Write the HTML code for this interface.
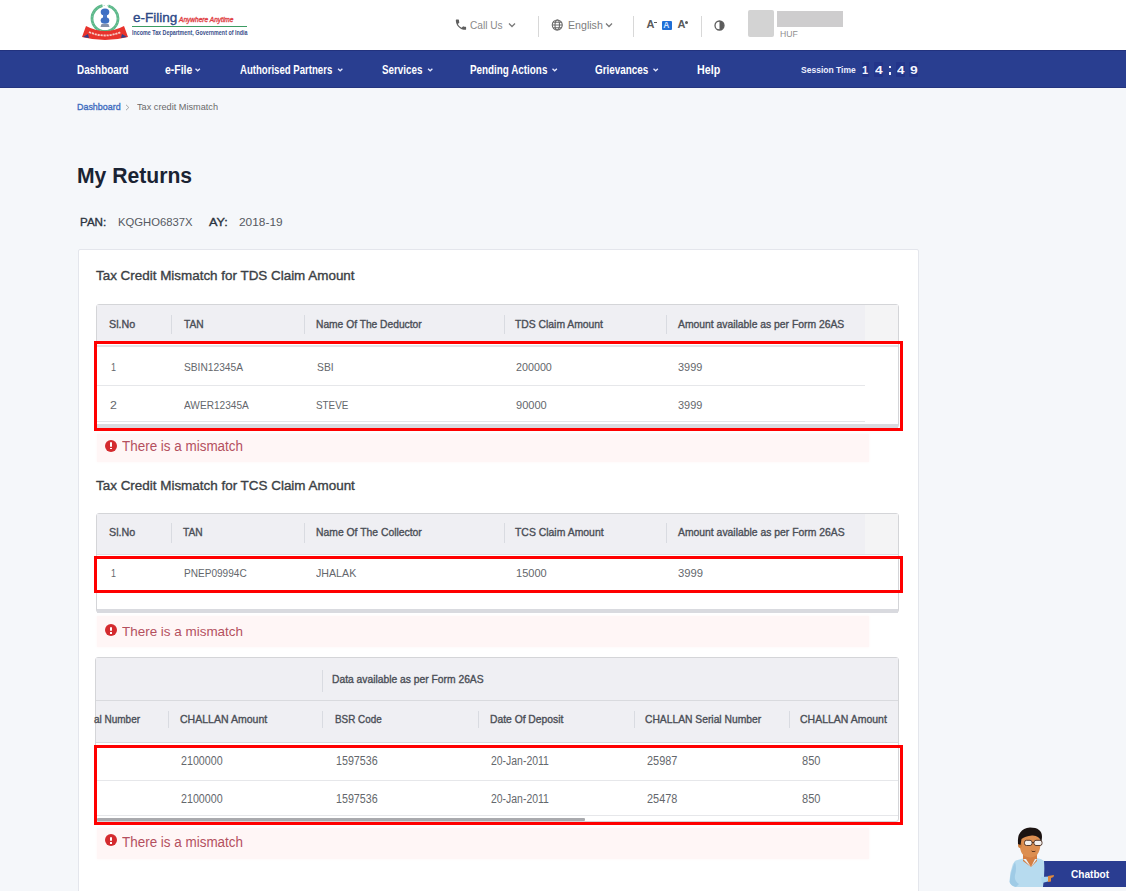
<!DOCTYPE html>
<html><head><meta charset="utf-8">
<style>
*{box-sizing:border-box}
html,body{margin:0;padding:0}
body{width:1126px;height:891px;overflow:hidden;position:relative;background:#f5f7fa;font-family:"Liberation Sans",sans-serif}
.a{position:absolute}
.t{position:absolute;white-space:nowrap;font-family:"Liberation Sans",sans-serif}
.hd{background:#efeff3}
.dv{position:absolute;width:1px;background:#d9dbe1}
.hl{position:absolute;height:1px;background:#e6e7ea}
.red{position:absolute;border:3px solid #ff0000}
.alert{position:absolute;left:97px;width:772px;background:#fff6f6;box-shadow:0 0 3px #fff6f6}
.ic{position:absolute;width:12px;height:12px;border-radius:50%;background:#d42b2f}
.ic:before{content:"";position:absolute;left:5px;top:2.5px;width:2px;height:4.5px;background:#fff;border-radius:1px}
.ic:after{content:"";position:absolute;left:5px;top:8px;width:2px;height:1.6px;background:#fff}
</style></head><body>
<!-- header -->
<div class="a" style="left:0;top:0;width:1126px;height:50px;background:#fff"></div>
<!-- logo -->
<svg class="a" style="left:80px;top:2px" width="52" height="40" viewBox="0 0 52 40">
  <circle cx="25" cy="16.5" r="13" fill="none" stroke="#5cb88a" stroke-width="2.8" stroke-dasharray="58.3 6 30"/><circle cx="25" cy="16.5" r="13" fill="none" stroke="#8fd0ae" stroke-width="1" stroke-dasharray="1 2.5"/>
  <ellipse cx="25" cy="10" rx="4.3" ry="3.6" fill="#3d6fc4"/>
  <rect x="23" y="12.5" width="4" height="4" fill="#4a78c8"/>
  <ellipse cx="25" cy="18.5" rx="4.3" ry="3.3" fill="#3f70c2"/>
  <path d="M21.5 22 h7 l1 3 h-9z" fill="#8592aa"/>
  <path d="M6 24 Q25 34 44 24 L48 35 Q25 41 2 35 Z" fill="#e8332c"/>
  <path d="M3 35 l5 -3 l1 4z M47 35 l-5 -3 l-1 4z" fill="#33408a"/>
  <path d="M9 30 Q25 37 41 30" fill="none" stroke="#f6c9c3" stroke-width="1.8" stroke-dasharray="2.2 0.8"/>
</svg>
<div class="a" style="left:132px;top:26px;width:115px;height:1.3px;background:#3c9c62"></div>
<!-- call us -->
<svg class="a" style="left:454.5px;top:18.5px" width="12.5" height="12" viewBox="2 2 21 21"><path fill="#5f5f5f" d="M6.6 10.8c1.4 2.8 3.8 5.1 6.6 6.6l2.2-2.2c.3-.3.7-.4 1-.2 1.1.4 2.3.6 3.6.6.6 0 1 .4 1 1V20c0 .6-.4 1-1 1C10.6 21 3 13.4 3 4c0-.6.4-1 1-1h3.5c.6 0 1 .4 1 1 0 1.3.2 2.5.6 3.6.1.3 0 .7-.2 1L6.6 10.8z"/></svg>
<svg class="a" style="left:508px;top:22px" width="8" height="6" viewBox="0 0 8 6"><path d="M1 1.5 L4 4.5 L7 1.5" fill="none" stroke="#7a7a7a" stroke-width="1.3"/></svg>
<div class="a" style="left:537.5px;top:16px;width:1.2px;height:21px;background:#d8d8d8"></div>
<svg class="a" style="left:550.5px;top:18.5px" width="12.5" height="12" viewBox="0 0 24 24"><g fill="none" stroke="#6a6a6a" stroke-width="2.2"><circle cx="12" cy="12" r="10"/><ellipse cx="12" cy="12" rx="4.5" ry="10"/><path d="M2 12h20M4 6.5h16M4 17.5h16"/></g></svg>
<svg class="a" style="left:604.5px;top:22px" width="8" height="6" viewBox="0 0 8 6"><path d="M1 1.5 L4 4.5 L7 1.5" fill="none" stroke="#7a7a7a" stroke-width="1.3"/></svg>
<div class="a" style="left:632.5px;top:16px;width:1.2px;height:21px;background:#d8d8d8"></div>
<!-- A- A A+ -->
<div class="t" style="left:646.5px;top:19px;font-size:11px;line-height:11px;font-weight:700;color:#5a5a5a">A</div>
<div class="a" style="left:653.5px;top:21.5px;width:3px;height:1.2px;background:#5a5a5a"></div>
<div class="a" style="left:661.5px;top:20.5px;width:10px;height:9px;background:#1f6fd6;border-radius:1px"></div>
<div class="t" style="left:663.2px;top:20.6px;font-size:8.5px;line-height:9px;font-weight:700;color:#cfe3ff">A</div>
<div class="t" style="left:677.5px;top:19px;font-size:11px;line-height:11px;font-weight:700;color:#5a5a5a">A</div>
<div class="a" style="left:684.5px;top:20.5px;width:3px;height:3px;background:#5a5a5a;border-radius:50%"></div>
<div class="a" style="left:700.5px;top:16px;width:1.2px;height:21px;background:#d8d8d8"></div>
<svg class="a" style="left:713.5px;top:19.5px" width="11" height="11" viewBox="0 0 22 22"><circle cx="11" cy="11" r="9" fill="#fff" stroke="#5c5c5c" stroke-width="2.6"/><path d="M11 2 A9 9 0 0 1 11 20 Z" fill="#5c5c5c"/></svg>
<div class="a" style="left:747.5px;top:10px;width:26px;height:27px;background:#d3d3d3;border-radius:2px"></div>
<div class="a" style="left:777px;top:10.5px;width:66px;height:16px;background:#cecdce"></div>
<!-- nav -->
<div class="a" style="left:0;top:50px;width:1126px;height:38px;background:#293e90;border-top:1px solid #22327e;border-bottom:1px solid #24357f"></div>
<svg class="a" style="left:0;top:50px" width="1126" height="38" viewBox="0 0 1126 38">
 <g fill="none" stroke="#e6e9ff" stroke-width="1.3">
  <path d="M195.5 18.8 l2.2 2 l2.2 -2"/>
  <path d="M338 18.8 l2.2 2 l2.2 -2"/>
  <path d="M428 18.8 l2.2 2 l2.2 -2"/>
  <path d="M552.5 18.8 l2.2 2 l2.2 -2"/>
  <path d="M653.5 18.8 l2.2 2 l2.2 -2"/>
 </g>
</svg>
<div class="a" style="left:861.5px;top:62px;width:7.5px;height:14.5px;background:#23358a;border-radius:1px"></div>
<div class="a" style="left:874.3px;top:62px;width:9px;height:14.5px;background:#23358a;border-radius:1px"></div>
<div class="a" style="left:896px;top:62px;width:8.8px;height:14.5px;background:#23358a;border-radius:1px"></div>
<div class="a" style="left:909px;top:62px;width:9.4px;height:14.5px;background:#23358a;border-radius:1px"></div>
<div class="a" style="left:888.5px;top:65.5px;width:2.8px;height:2.8px;background:#eef0ff"></div>
<div class="a" style="left:888.5px;top:71.8px;width:2.8px;height:2.8px;background:#eef0ff"></div>
<!-- breadcrumb chevron -->
<svg class="a" style="left:125px;top:103.5px" width="5" height="7" viewBox="0 0 5 7"><path d="M1 0.8 L3.8 3.5 L1 6.2" fill="none" stroke="#9a9a9a" stroke-width="0.9"/></svg>
<!-- card -->
<div class="a" style="left:78px;top:249px;width:841px;height:700px;background:#fff;border:1px solid #e4e6ec;border-radius:2px"></div>

<!-- table 1 -->
<div class="a" style="left:96px;top:304px;width:803px;height:124px;background:#fff;border:1px solid #d4d5d8;border-radius:3px"></div>
<div class="a hd" style="left:97px;top:305px;width:768px;height:36px"></div>
<div class="a" style="left:865px;top:305px;width:33px;height:36px;background:#f4f4f5"></div>
<div class="dv" style="left:171px;top:315px;height:19px"></div>
<div class="dv" style="left:304px;top:315px;height:19px"></div>
<div class="dv" style="left:504px;top:315px;height:19px"></div>
<div class="dv" style="left:666px;top:315px;height:19px"></div>
<div class="a" style="left:97px;top:345px;width:801px;height:2px;background:#e3e4e7"></div>
<div class="hl" style="left:97px;top:385px;width:768px"></div>
<div class="hl" style="left:97px;top:421px;width:768px;background:#e4e5e8"></div>
<div class="a" style="left:97px;top:423.5px;width:801px;height:4px;background:#d9dadf"></div>
<div class="red" style="left:94px;top:341px;width:809px;height:90px"></div>
<div class="alert" style="top:433.5px;height:28px"></div>
<div class="ic" style="left:105px;top:439.5px"></div>

<!-- table 2 -->
<div class="a" style="left:96px;top:513px;width:803px;height:100px;background:#fff;border:1px solid #d4d5d8;border-radius:3px"></div>
<div class="a hd" style="left:97px;top:514px;width:768px;height:40px"></div>
<div class="a" style="left:865px;top:514px;width:33px;height:40px;background:#f4f4f5"></div>
<div class="hl" style="left:97px;top:554px;width:801px;background:#dfe0e4"></div>
<div class="dv" style="left:171px;top:523px;height:20px"></div>
<div class="dv" style="left:304px;top:523px;height:20px"></div>
<div class="dv" style="left:504px;top:523px;height:20px"></div>
<div class="dv" style="left:666px;top:523px;height:20px"></div>
<div class="a" style="left:97px;top:609px;width:801px;height:4px;background:#d9dadf"></div>
<div class="red" style="left:94px;top:556px;width:809px;height:37px"></div>
<div class="alert" style="top:616px;height:31px"></div>
<div class="ic" style="left:104.8px;top:624px"></div>

<!-- table 3 -->
<div class="a" style="left:94.5px;top:657px;width:804px;height:165px;background:#fff;border:1px solid #d4d5d8;border-radius:3px"></div>
<div class="a hd" style="left:95.5px;top:658px;width:802px;height:84px"></div>
<div class="hl" style="left:95.5px;top:700px;width:802px;background:#d9dade"></div>
<div class="hl" style="left:95.5px;top:741.5px;width:802px;background:#d9dade"></div>
<div class="dv" style="left:322.3px;top:669.5px;height:22px"></div>
<div class="dv" style="left:167.8px;top:710.5px;height:17px"></div>
<div class="dv" style="left:322.3px;top:710.5px;height:17px"></div>
<div class="dv" style="left:478px;top:710.5px;height:17px"></div>
<div class="dv" style="left:633.5px;top:710.5px;height:17px"></div>
<div class="dv" style="left:788.7px;top:710.5px;height:17px"></div>
<div class="hl" style="left:97px;top:779.5px;width:801px"></div>
<div class="hl" style="left:97px;top:815px;width:801px;background:#e6e7ea"></div>
<div class="a" style="left:97px;top:818px;width:488px;height:3px;background:#a9aaae;border-radius:1px"></div>
<div class="red" style="left:94px;top:744.5px;width:808.5px;height:80.5px"></div>
<div class="alert" style="top:827.5px;height:31px"></div>
<div class="ic" style="left:104.8px;top:834.3px"></div>


<!-- chatbot -->
<div class="a" style="left:1039px;top:860.5px;width:87px;height:26.5px;background:#2a3d91;border-radius:3px 0 0 3px"></div>
<svg class="a" style="left:1000px;top:820px" width="70" height="71" viewBox="0 0 70 71">
  <path d="M15 41 Q22 38 27 38 L37 38 Q42 39 44 41 Q45 52 43 67 L17 67 Q12 67 10 63 Q9 55 12 47 Q13 43 15 41 Z" fill="#b7dbef"/>
  <path d="M15 42 Q11 50 9.5 62 Q11 66 16 67 L19 64 Q14 61 15 55 Q17 48 15 42Z" fill="#9fcbe6"/>
  <path d="M41 57 L49 56.5 L50 61 L42 63 Z" fill="#a9d4ee"/>
  <path d="M48 56 L54 55 L53.5 57 L51 58 L51 61.5 L48 62 Z" fill="#e08a3c"/>
  <path d="M23 33 L37 33 L37 41 L31 47 L23 41 Z" fill="#d47e42"/>
  <path d="M23 39 L31 47 L26 39Z M37 39 L31 47 L35 39Z" fill="#e6f3fb"/>
  <path d="M19.5 20 Q19 35 27 37 Q33 38.5 37 35 Q41 30 40.5 20 Q38 14 30 14 Q21 14 19.5 20 Z" fill="#dc8e50"/>
  <ellipse cx="20" cy="25" rx="2" ry="3" fill="#d0803f"/>
  <path d="M18 24 Q16.5 9 30 7.5 Q42 7.5 42 17 L41.5 22 Q39 15 32 15.5 Q25 16 21.5 19 L20.5 25 Z" fill="#1b1311"/>
  <g fill="#f3f0ee" stroke="#4a2e20" stroke-width="0.9"><rect x="24.5" y="20.3" width="7.5" height="5.2" rx="2"/><rect x="34" y="20.3" width="8" height="5.2" rx="2"/></g>
  <path d="M32 22.5 h2" stroke="#4a2e20" stroke-width="0.9"/>
  <path d="M31 30.5 Q33.5 33.5 36 30.8 Q33.5 31.8 31 30.5Z" fill="#3b1d12"/>
</svg>
<div class='t' style="left:133.11px;top:12.20px;font-size:12.78px;line-height:12.78px;font-weight:400;color:#2c4886;-webkit-text-stroke:0.35px #2c4886;transform:scaleX(1.0580);transform-origin:0 0;">e-Filing</div>
<div class='t' style="left:178.50px;top:17.30px;font-size:7.08px;line-height:7.08px;font-weight:400;color:#e03e44;-webkit-text-stroke:0.35px #e03e44;transform:scaleX(0.9275);transform-origin:0 0;font-style:italic;">Anywhere Anytime</div>
<div class='t' style="left:132.01px;top:29.60px;font-size:6.94px;line-height:6.94px;font-weight:700;color:#3a4f8a;transform:scaleX(0.7726);transform-origin:0 0;">Income Tax Department, Government of India</div>
<div class='t' style="left:470.27px;top:20.50px;font-size:10.43px;line-height:10.43px;font-weight:400;color:#8a8a8a;transform:scaleX(0.9722);transform-origin:0 0;">Call Us</div>
<div class='t' style="left:567.59px;top:20.60px;font-size:10.14px;line-height:10.14px;font-weight:400;color:#7d7d7d;transform:scaleX(1.0482);transform-origin:0 0;">English</div>
<div class='t' style="left:780.40px;top:30.20px;font-size:8.57px;line-height:8.57px;font-weight:400;color:#8f8f8f;transform:scaleX(1.0108);transform-origin:0 0;">HUF</div>
<div class='t' style="left:76.56px;top:64.00px;font-size:12.0px;line-height:12.0px;font-weight:700;color:#ffffff;transform:scaleX(0.8228);transform-origin:0 0;">Dashboard</div>
<div class='t' style="left:164.56px;top:64.00px;font-size:12.0px;line-height:12.0px;font-weight:700;color:#ffffff;transform:scaleX(0.8703);transform-origin:0 0;">e-File</div>
<div class='t' style="left:239.56px;top:64.00px;font-size:12.0px;line-height:12.0px;font-weight:700;color:#ffffff;transform:scaleX(0.7999);transform-origin:0 0;">Authorised Partners</div>
<div class='t' style="left:381.76px;top:64.00px;font-size:12.0px;line-height:12.0px;font-weight:700;color:#ffffff;transform:scaleX(0.8176);transform-origin:0 0;">Services</div>
<div class='t' style="left:470.46px;top:64.00px;font-size:12.0px;line-height:12.0px;font-weight:700;color:#ffffff;transform:scaleX(0.8211);transform-origin:0 0;">Pending Actions</div>
<div class='t' style="left:595.36px;top:64.00px;font-size:12.0px;line-height:12.0px;font-weight:700;color:#ffffff;transform:scaleX(0.8233);transform-origin:0 0;">Grievances</div>
<div class='t' style="left:696.66px;top:64.00px;font-size:12.0px;line-height:12.0px;font-weight:700;color:#ffffff;transform:scaleX(0.8910);transform-origin:0 0;">Help</div>
<div class='t' style="left:800.73px;top:65.40px;font-size:9.57px;line-height:9.57px;font-weight:700;color:#eef0ff;transform:scaleX(0.8903);transform-origin:0 0;">Session Time</div>
<div class='t' style="left:862.33px;top:64.50px;font-size:11.0px;line-height:11.0px;font-weight:700;color:#f4f6ff;transform:scaleX(1.0024);transform-origin:0 0;">1</div>
<div class='t' style="left:875.03px;top:64.50px;font-size:11.0px;line-height:11.0px;font-weight:700;color:#f4f6ff;transform:scaleX(1.2473);transform-origin:0 0;">4</div>
<div class='t' style="left:896.83px;top:64.50px;font-size:11.0px;line-height:11.0px;font-weight:700;color:#f4f6ff;transform:scaleX(1.2147);transform-origin:0 0;">4</div>
<div class='t' style="left:909.93px;top:64.50px;font-size:11.0px;line-height:11.0px;font-weight:700;color:#f4f6ff;transform:scaleX(1.2637);transform-origin:0 0;">9</div>
<div class='t' style="left:77.01px;top:102.40px;font-size:9.86px;line-height:9.86px;font-weight:400;color:#3d6cc0;-webkit-text-stroke:0.35px #3d6cc0;transform:scaleX(0.9068);transform-origin:0 0;">Dashboard</div>
<div class='t' style="left:136.61px;top:102.40px;font-size:9.86px;line-height:9.86px;font-weight:400;color:#6a6a6a;transform:scaleX(0.9310);transform-origin:0 0;">Tax credit Mismatch</div>
<div class='t' style="left:77.15px;top:165.00px;font-size:22.14px;line-height:22.14px;font-weight:700;color:#1a2333;transform:scaleX(0.9553);transform-origin:0 0;">My Returns</div>
<div class='t' style="left:80.48px;top:215.60px;font-size:11.71px;line-height:11.71px;font-weight:400;color:#2c3440;-webkit-text-stroke:0.35px #2c3440;transform:scaleX(0.9919);transform-origin:0 0;">PAN:</div>
<div class='t' style="left:117.58px;top:215.60px;font-size:11.71px;line-height:11.71px;font-weight:400;color:#555a62;transform:scaleX(0.9628);transform-origin:0 0;">KQGHO6837X</div>
<div class='t' style="left:208.98px;top:215.60px;font-size:11.71px;line-height:11.71px;font-weight:400;color:#2c3440;-webkit-text-stroke:0.35px #2c3440;transform:scaleX(1.0853);transform-origin:0 0;">AY:</div>
<div class='t' style="left:238.68px;top:215.60px;font-size:11.71px;line-height:11.71px;font-weight:400;color:#555a62;transform:scaleX(1.0160);transform-origin:0 0;">2018-19</div>
<div class='t' style="left:96.08px;top:269.40px;font-size:13.14px;line-height:13.14px;font-weight:400;color:#3b3f45;-webkit-text-stroke:0.35px #3b3f45;transform:scaleX(1.0225);transform-origin:0 0;">Tax Credit Mismatch for TDS Claim Amount</div>
<div class='t' style="left:96.07px;top:478.80px;font-size:13.29px;line-height:13.29px;font-weight:400;color:#3b3f45;-webkit-text-stroke:0.35px #3b3f45;transform:scaleX(1.0117);transform-origin:0 0;">Tax Credit Mismatch for TCS Claim Amount</div>
<div class='t' style="left:109.26px;top:319.20px;font-size:10.57px;line-height:10.57px;font-weight:400;color:#4a4e56;-webkit-text-stroke:0.35px #4a4e56;transform:scaleX(1.0130);transform-origin:0 0;">Sl.No</div>
<div class='t' style="left:183.76px;top:319.20px;font-size:10.57px;line-height:10.57px;font-weight:400;color:#4a4e56;-webkit-text-stroke:0.35px #4a4e56;transform:scaleX(0.9674);transform-origin:0 0;">TAN</div>
<div class='t' style="left:316.06px;top:319.20px;font-size:10.57px;line-height:10.57px;font-weight:400;color:#4a4e56;-webkit-text-stroke:0.35px #4a4e56;transform:scaleX(0.9695);transform-origin:0 0;">Name Of The Deductor</div>
<div class='t' style="left:515.36px;top:319.20px;font-size:10.57px;line-height:10.57px;font-weight:400;color:#4a4e56;-webkit-text-stroke:0.35px #4a4e56;transform:scaleX(0.9796);transform-origin:0 0;">TDS Claim Amount</div>
<div class='t' style="left:677.66px;top:319.20px;font-size:10.57px;line-height:10.57px;font-weight:400;color:#4a4e56;-webkit-text-stroke:0.35px #4a4e56;transform:scaleX(0.9800);transform-origin:0 0;">Amount available as per Form 26AS</div>
<div class='t' style="left:110.73px;top:361.50px;font-size:11.0px;line-height:11.0px;font-weight:400;color:#64676c;transform:scaleX(0.8229);transform-origin:0 0;">1</div>
<div class='t' style="left:184.23px;top:361.50px;font-size:11.0px;line-height:11.0px;font-weight:400;color:#64676c;transform:scaleX(0.9282);transform-origin:0 0;">SBIN12345A</div>
<div class='t' style="left:316.63px;top:361.50px;font-size:11.0px;line-height:11.0px;font-weight:400;color:#64676c;transform:scaleX(0.9383);transform-origin:0 0;">SBI</div>
<div class='t' style="left:516.03px;top:361.50px;font-size:11.0px;line-height:11.0px;font-weight:400;color:#64676c;transform:scaleX(0.9761);transform-origin:0 0;">200000</div>
<div class='t' style="left:678.23px;top:361.50px;font-size:11.0px;line-height:11.0px;font-weight:400;color:#64676c;transform:scaleX(0.9941);transform-origin:0 0;">3999</div>
<div class='t' style="left:110.42px;top:399.60px;font-size:11.14px;line-height:11.14px;font-weight:400;color:#64676c;transform:scaleX(1.1086);transform-origin:0 0;">2</div>
<div class='t' style="left:183.92px;top:399.60px;font-size:11.14px;line-height:11.14px;font-weight:400;color:#64676c;transform:scaleX(0.9079);transform-origin:0 0;">AWER12345A</div>
<div class='t' style="left:316.22px;top:399.60px;font-size:11.14px;line-height:11.14px;font-weight:400;color:#64676c;transform:scaleX(0.8869);transform-origin:0 0;">STEVE</div>
<div class='t' style="left:516.02px;top:399.60px;font-size:11.14px;line-height:11.14px;font-weight:400;color:#64676c;transform:scaleX(0.9942);transform-origin:0 0;">90000</div>
<div class='t' style="left:678.22px;top:399.60px;font-size:11.14px;line-height:11.14px;font-weight:400;color:#64676c;transform:scaleX(0.9842);transform-origin:0 0;">3999</div>
<div class='t' style="left:108.85px;top:527.30px;font-size:10.71px;line-height:10.71px;font-weight:400;color:#4a4e56;-webkit-text-stroke:0.35px #4a4e56;transform:scaleX(1.0005);transform-origin:0 0;">Sl.No</div>
<div class='t' style="left:183.45px;top:527.30px;font-size:10.71px;line-height:10.71px;font-weight:400;color:#4a4e56;-webkit-text-stroke:0.35px #4a4e56;transform:scaleX(0.9551);transform-origin:0 0;">TAN</div>
<div class='t' style="left:315.85px;top:527.30px;font-size:10.71px;line-height:10.71px;font-weight:400;color:#4a4e56;-webkit-text-stroke:0.35px #4a4e56;transform:scaleX(0.9683);transform-origin:0 0;">Name Of The Collector</div>
<div class='t' style="left:515.25px;top:527.30px;font-size:10.71px;line-height:10.71px;font-weight:400;color:#4a4e56;-webkit-text-stroke:0.35px #4a4e56;transform:scaleX(0.9735);transform-origin:0 0;">TCS Claim Amount</div>
<div class='t' style="left:677.85px;top:527.30px;font-size:10.71px;line-height:10.71px;font-weight:400;color:#4a4e56;-webkit-text-stroke:0.35px #4a4e56;transform:scaleX(0.9690);transform-origin:0 0;">Amount available as per Form 26AS</div>
<div class='t' style="left:111.27px;top:569.30px;font-size:10.43px;line-height:10.43px;font-weight:400;color:#64676c;transform:scaleX(0.8557);transform-origin:0 0;">1</div>
<div class='t' style="left:183.97px;top:569.30px;font-size:10.43px;line-height:10.43px;font-weight:400;color:#64676c;transform:scaleX(0.9656);transform-origin:0 0;">PNEP09994C</div>
<div class='t' style="left:316.27px;top:569.30px;font-size:10.43px;line-height:10.43px;font-weight:400;color:#64676c;transform:scaleX(1.0221);transform-origin:0 0;">JHALAK</div>
<div class='t' style="left:516.07px;top:569.30px;font-size:10.43px;line-height:10.43px;font-weight:400;color:#64676c;transform:scaleX(1.0578);transform-origin:0 0;">15000</div>
<div class='t' style="left:678.27px;top:569.30px;font-size:10.43px;line-height:10.43px;font-weight:400;color:#64676c;transform:scaleX(1.0808);transform-origin:0 0;">3999</div>
<div class='t' style="left:331.85px;top:674.20px;font-size:10.71px;line-height:10.71px;font-weight:400;color:#4a4e56;-webkit-text-stroke:0.35px #4a4e56;transform:scaleX(0.9616);transform-origin:0 0;">Data available as per Form 26AS</div>
<div class='t' style="left:94.14px;top:714.20px;font-size:10.86px;line-height:10.86px;font-weight:400;color:#4a4e56;-webkit-text-stroke:0.35px #4a4e56;transform:scaleX(0.9187);transform-origin:0 0;">al Number</div>
<div class='t' style="left:179.54px;top:714.20px;font-size:10.86px;line-height:10.86px;font-weight:400;color:#4a4e56;-webkit-text-stroke:0.35px #4a4e56;transform:scaleX(0.9698);transform-origin:0 0;">CHALLAN Amount</div>
<div class='t' style="left:335.04px;top:714.20px;font-size:10.86px;line-height:10.86px;font-weight:400;color:#4a4e56;-webkit-text-stroke:0.35px #4a4e56;transform:scaleX(0.9086);transform-origin:0 0;">BSR Code</div>
<div class='t' style="left:490.14px;top:714.20px;font-size:10.86px;line-height:10.86px;font-weight:400;color:#4a4e56;-webkit-text-stroke:0.35px #4a4e56;transform:scaleX(0.9489);transform-origin:0 0;">Date Of Deposit</div>
<div class='t' style="left:645.34px;top:714.20px;font-size:10.86px;line-height:10.86px;font-weight:400;color:#4a4e56;-webkit-text-stroke:0.35px #4a4e56;transform:scaleX(0.9478);transform-origin:0 0;">CHALLAN Serial Number</div>
<div class='t' style="left:800.44px;top:714.20px;font-size:10.86px;line-height:10.86px;font-weight:400;color:#4a4e56;-webkit-text-stroke:0.35px #4a4e56;transform:scaleX(0.9653);transform-origin:0 0;">CHALLAN Amount</div>
<div class='t' style="left:181.07px;top:756.10px;font-size:11.86px;line-height:11.86px;font-weight:400;color:#64676c;transform:scaleX(0.9023);transform-origin:0 0;">2100000</div>
<div class='t' style="left:336.17px;top:756.10px;font-size:11.86px;line-height:11.86px;font-weight:400;color:#64676c;transform:scaleX(0.9023);transform-origin:0 0;">1597536</div>
<div class='t' style="left:491.47px;top:756.10px;font-size:11.86px;line-height:11.86px;font-weight:400;color:#64676c;transform:scaleX(0.8804);transform-origin:0 0;">20-Jan-2011</div>
<div class='t' style="left:647.07px;top:756.10px;font-size:11.86px;line-height:11.86px;font-weight:400;color:#64676c;transform:scaleX(0.9204);transform-origin:0 0;">25987</div>
<div class='t' style="left:802.07px;top:756.10px;font-size:11.86px;line-height:11.86px;font-weight:400;color:#64676c;transform:scaleX(0.9325);transform-origin:0 0;">850</div>
<div class='t' style="left:181.07px;top:794.10px;font-size:11.86px;line-height:11.86px;font-weight:400;color:#64676c;transform:scaleX(0.9023);transform-origin:0 0;">2100000</div>
<div class='t' style="left:336.17px;top:794.10px;font-size:11.86px;line-height:11.86px;font-weight:400;color:#64676c;transform:scaleX(0.9023);transform-origin:0 0;">1597536</div>
<div class='t' style="left:491.47px;top:794.10px;font-size:11.86px;line-height:11.86px;font-weight:400;color:#64676c;transform:scaleX(0.8804);transform-origin:0 0;">20-Jan-2011</div>
<div class='t' style="left:647.07px;top:794.10px;font-size:11.86px;line-height:11.86px;font-weight:400;color:#64676c;transform:scaleX(0.9204);transform-origin:0 0;">25478</div>
<div class='t' style="left:802.07px;top:794.10px;font-size:11.86px;line-height:11.86px;font-weight:400;color:#64676c;transform:scaleX(0.9325);transform-origin:0 0;">850</div>
<div class='t' style="left:122.34px;top:440.40px;font-size:13.71px;line-height:13.71px;font-weight:400;color:#b4505e;transform:scaleX(0.9809);transform-origin:0 0;">There is a mismatch</div>
<div class='t' style="left:122.35px;top:624.50px;font-size:13.57px;line-height:13.57px;font-weight:400;color:#b4505e;transform:scaleX(0.9909);transform-origin:0 0;">There is a mismatch</div>
<div class='t' style="left:122.34px;top:836.00px;font-size:13.71px;line-height:13.71px;font-weight:400;color:#b4505e;transform:scaleX(0.9809);transform-origin:0 0;">There is a mismatch</div>
<div class='t' style="left:1071.06px;top:869.40px;font-size:10.57px;line-height:10.57px;font-weight:700;color:#ffffff;transform:scaleX(0.9542);transform-origin:0 0;">Chatbot</div>

</body></html>
